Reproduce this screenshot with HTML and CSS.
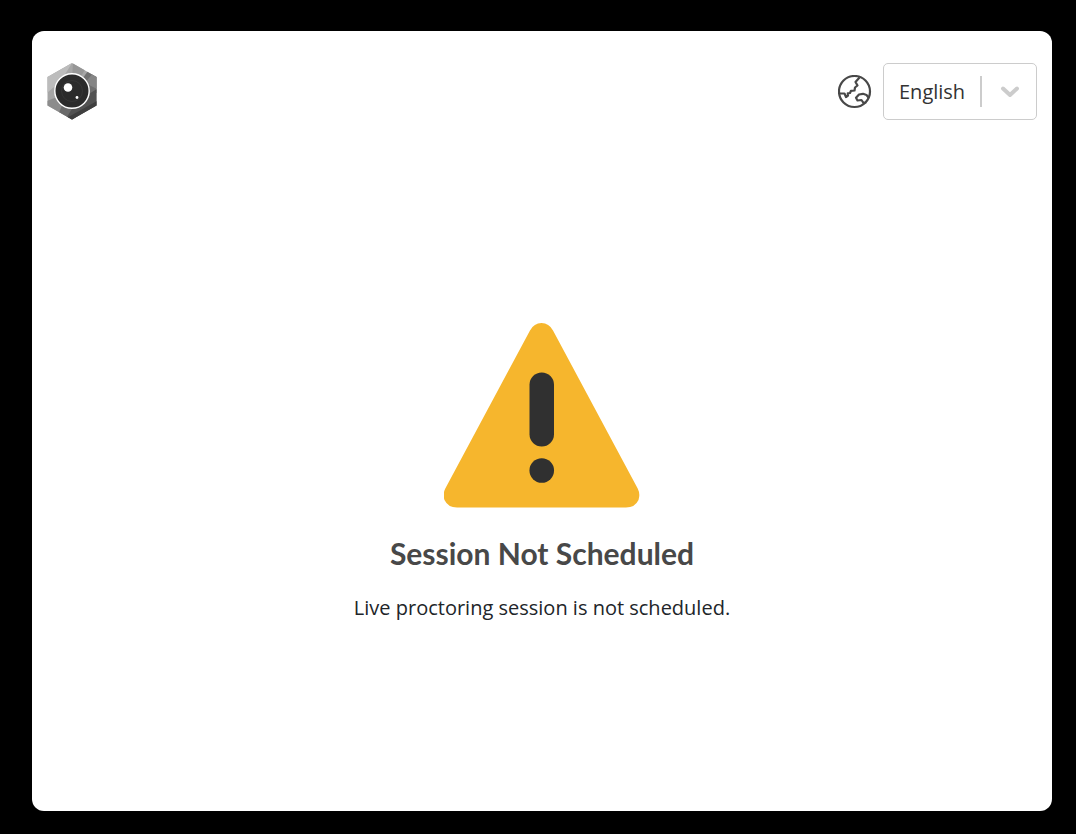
FILE: index.html
```html
<!DOCTYPE html>
<html lang="en">
<head>
    <meta charset="UTF-8">
    <meta name="viewport" content="width=device-width, initial-scale=1.0">
    <title>Session Not Scheduled</title>
    <link rel="stylesheet" href="styles.css">
</head>
<body>
    <div class="card">
        <!-- Header -->
        <header class="header">
            <svg class="logo" viewBox="0 0 50 57" role="img" aria-label="Logo">
                <defs>
                    <clipPath id="hexagon">
                        <path d="M25 0 49.5 14V42.500L25 56.500 .5 42.500V14Z"/>
                    </clipPath>
                </defs>
                <g clip-path="url(#hexagon)">
                    <path fill="#a6a6a6" d="M0 0H50V57H0Z"/>
                    <path fill="#bcbcbc" d="M0 0H25L14 18 0 30Z"/>
                    <path fill="#969696" d="M26 0H42L30 20 25 16Z"/>
                    <path fill="#707070" d="M41 8 50 12V30H25Z"/>
                    <path fill="#858585" d="M46 10 50 12V26L38 20Z"/>
                    <path fill="#8c8c8c" d="M0 38 10 34 22 57H0Z"/>
                    <path fill="#6a6a6a" d="M16 40 30 40 28 57H9Z"/>
                    <path fill="#525252" d="M50 26V57H18L30 38Z"/>
                    <path fill="#3f3f3f" d="M50 38V57H16Z"/>
                </g>
                <circle cx="25" cy="28" r="17.200" fill="#2b2b2b" stroke="#fff" stroke-width="1.4"/>
                <circle cx="25" cy="28" r="10.5" fill="none" stroke="#363636" stroke-width="1"/>
                <circle cx="21" cy="24.500" r="4.3" fill="#fff"/>
                <circle cx="30" cy="34.500" r="1.4" fill="#fff"/>
            </svg>

            <div class="language">
                <svg class="globe-icon" viewBox="0 0 34 34" aria-hidden="true">
                    <circle cx="16.500" cy="16.500" r="15.5"/>
                    <path d="M1.500 18.500H6.5L8 22 10 20.5 9.8 18.300 12 18 13 15.800 16.500 15.500 17 12.500 19.500 10.500 17.5 7 21.500 2.500"/>
                    <path d="M30.500 22.500 28.5 20 25 18.800 21 19.500 18 22.8 19.500 25.500 23.500 25 25.5 28 28.300 27.300"/>
                </svg>
                <div class="select-wrap">
                    <select class="language-select" aria-label="Language">
                        <option>English</option>
                    </select>
                    <span class="select-arrow">
                        <svg class="chevron-icon" viewBox="0 0 20 20" aria-hidden="true">
                            <path d="M3 6.500 10 13 17 6.500"/>
                        </svg>
                    </span>
                </div>
            </div>
        </header>

        <!-- Message -->
        <main class="message">
            <svg class="warning-icon" viewBox="0 0 196 185" aria-hidden="true">
                <path fill="#f6b62d" d="M86 7.5Q90 0 97.500 0T109 7.5L193.700 165.5Q196.500 171 194.500 177 191 184.500 182 184.500H13Q4 184.500 .5 177-1.500 171 1.300 165.5Z"/>
                <rect x="85.5" y="49.500" width="24.500" height="74" rx="12.250" fill="#303030"/>
                <circle cx="97.750" cy="147.5" r="12.300" fill="#303030"/>
            </svg>
            <h1 class="message-title">Session Not Scheduled</h1>
            <p class="message-text">Live proctoring session is not scheduled.</p>
        </main>
    </div>
</body>
</html>
```

FILE: styles.css
```css
* {
    margin: 0;
    padding: 0;
    box-sizing: border-box;
}

body {
    display: flex;
    min-height: 100vh;
    padding: 31px 24px 23px 32px;
    background-color: #000;
    color: #212529;
    font-family: 'Open Sans', 'Segoe UI', sans-serif;
    font-size: 20px;
    line-height: 30px;
}

.card {
    flex: 1;
    display: flex;
    flex-direction: column;
    padding: 32px 15px;
    background-color: #fff;
    border-radius: 12px;
}

/* Header */
.header {
    display: flex;
    justify-content: space-between;
    align-items: center;
}

.logo {
    width: 50px;
    height: 57px;
}

.language {
    display: flex;
    align-items: center;
    gap: 11px;
}

.globe-icon {
    width: 34px;
    height: 34px;
    fill: none;
    stroke: #484848;
    stroke-width: 2.2;
    stroke-linejoin: round;
}

.select-wrap {
    position: relative;
}

.language-select {
    display: block;
    width: 154px;
    height: 57px;
    padding: 0 56px 0 15px;
    appearance: none;
    background-color: #fff;
    border: 1px solid #ccc;
    border-radius: 5px;
    color: #333;
    font: inherit;
}

/* Divider and chevron drawn over the select */
.select-arrow {
    position: absolute;
    top: 13px;
    bottom: 13px;
    right: 0;
    width: 57px;
    display: flex;
    align-items: center;
    justify-content: center;
    border-left: 2px solid #ccc;
    pointer-events: none;
}

.chevron-icon {
    width: 20px;
    height: 20px;
    fill: none;
    stroke: #ccc;
    stroke-width: 4;
    stroke-linecap: round;
    stroke-linejoin: round;
}

/* Message */
.message {
    flex: 1;
    display: flex;
    flex-direction: column;
    align-items: center;
    justify-content: center;
    padding-top: 46px;
    text-align: center;
}

.warning-icon {
    width: 196px;
    height: 185px;
    margin-bottom: 27px;
}

.message-title {
    margin-bottom: 22px;
    color: #484848;
    font-family: Lato, sans-serif;
    font-size: 30px;
    font-weight: 700;
    line-height: 36px;
}
```
